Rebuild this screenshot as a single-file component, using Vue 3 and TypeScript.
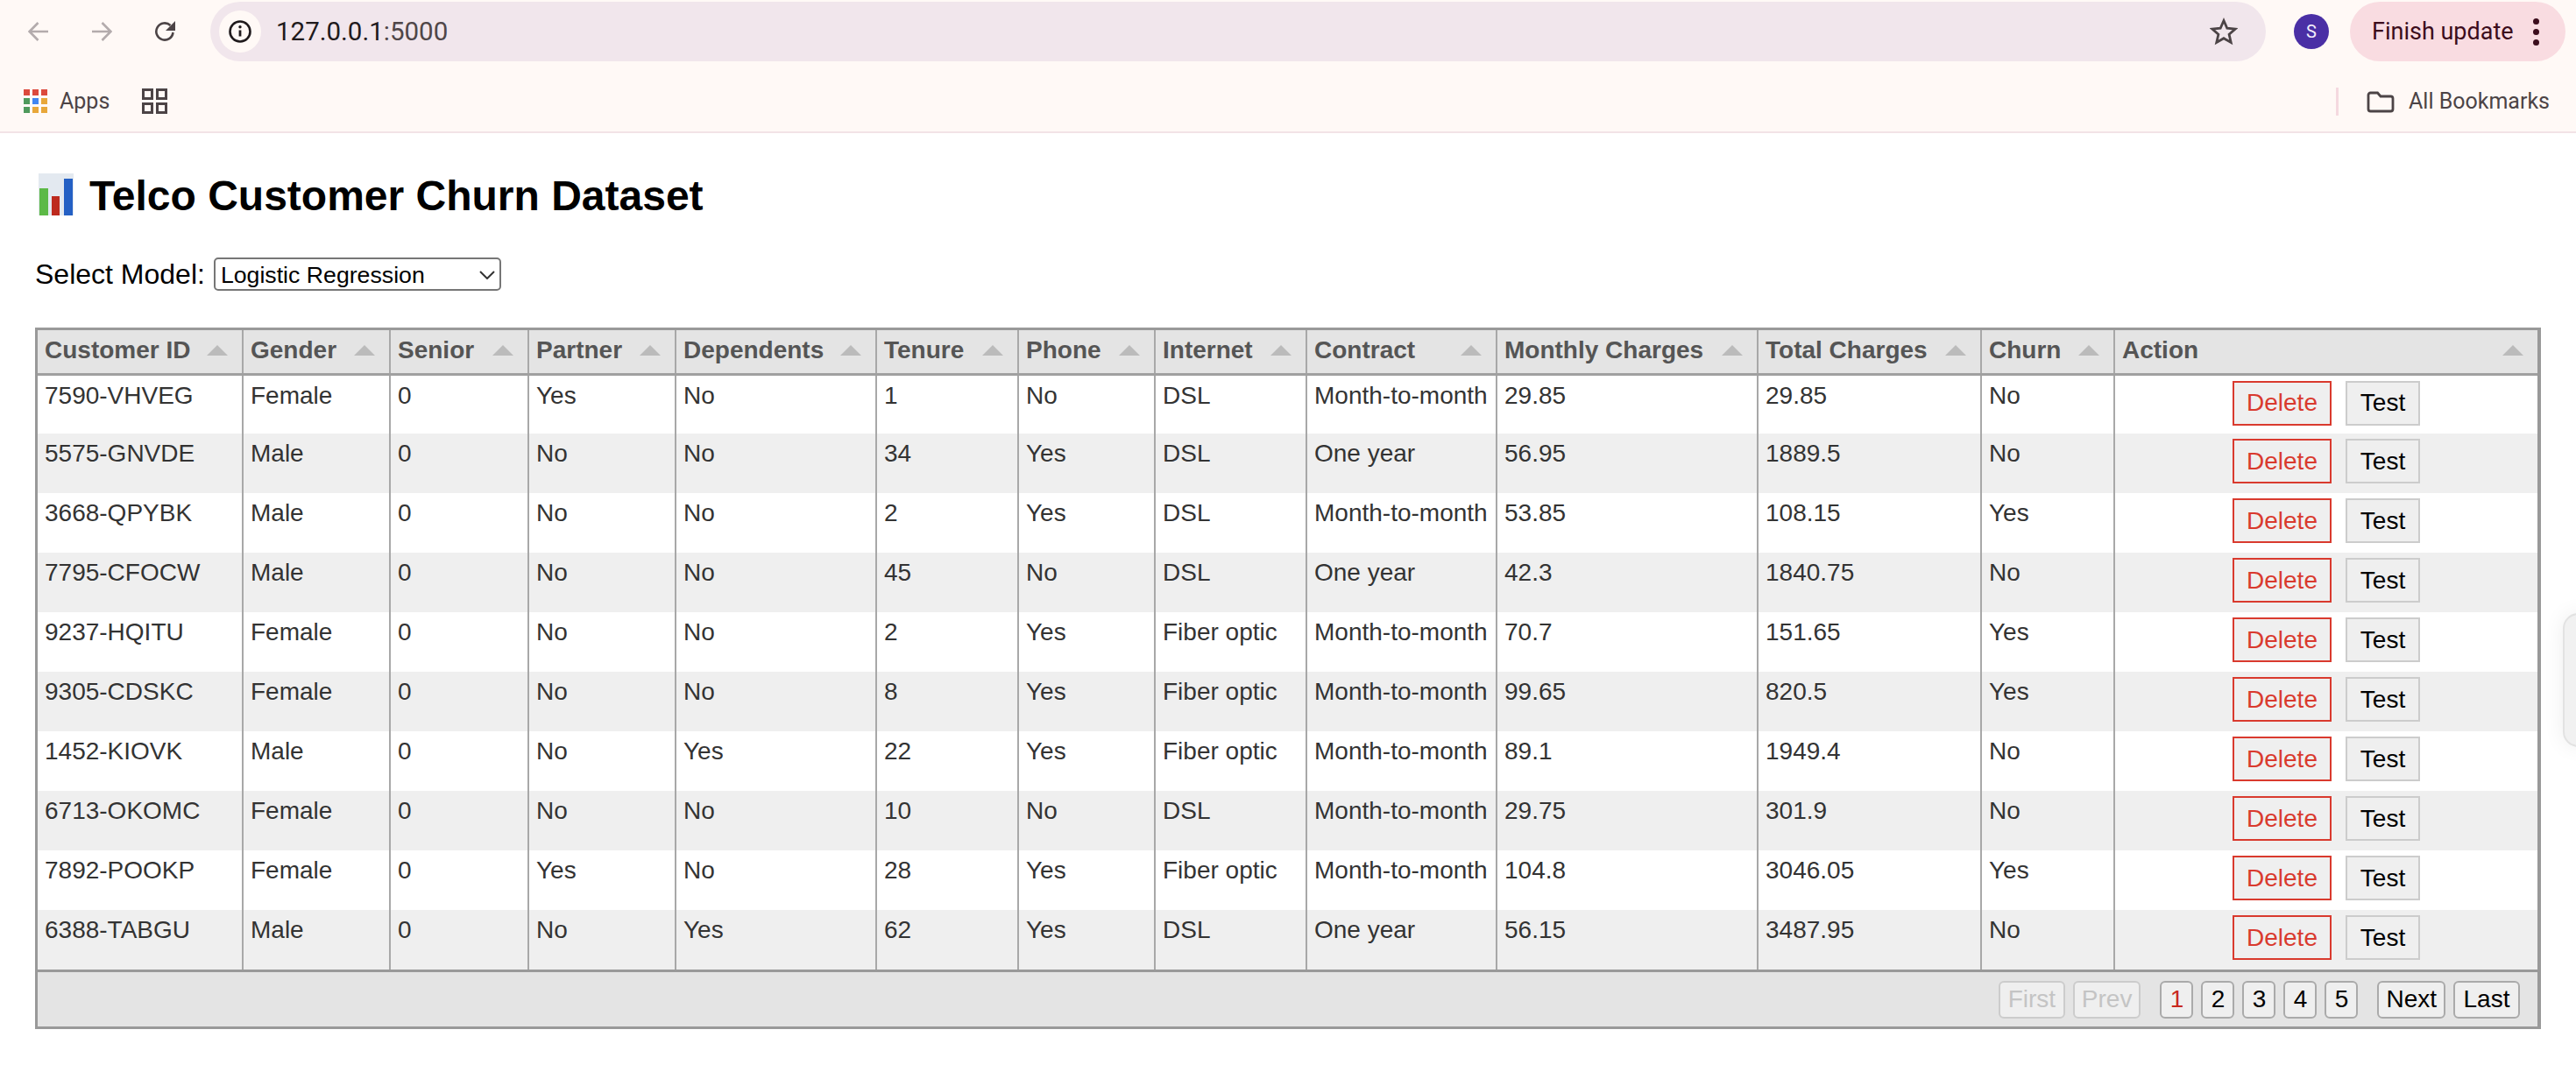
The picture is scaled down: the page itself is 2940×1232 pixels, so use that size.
<template>
  <div class="page">
    <header class="chrome">
      <div class="toolbar">
        <svg class="nav-icon dim" viewBox="0 0 24 24"><path d="M23 12H2.5M11.5 2 1.6 12l9.9 10" /></svg>
        <svg class="nav-icon dim" viewBox="0 0 24 24"><path d="M1 12h20.500M12.500 2l9.900 10-9.900 10" /></svg>
        <svg class="nav-icon" viewBox="0 0 24 24">
          <path d="M21.500 13a9.600 9.600 0 1 1-3-8" />
          <path class="solid" d="M24 0v11H13z" />
        </svg>
        <div class="omnibox">
          <div class="site-info">
            <svg viewBox="0 0 26 26" width="26" height="26">
              <circle cx="13" cy="13" r="11.500" fill="none" stroke="#1f1a1c" stroke-width="2.600" />
              <path d="M13 11.500v7" stroke="#1f1a1c" stroke-width="2.800" fill="none" />
              <circle cx="13" cy="7.800" r="1.700" fill="#1f1a1c" />
            </svg>
          </div>
          <span class="url">127.0.0.1<span class="port">:5000</span></span>
          <svg class="star" viewBox="0 0 32 32" width="32" height="32">
            <path d="M16 3.500l3.800 8.700 9.400.9-7.100 6.200 2.100 9.200-8.200-4.800-8.200 4.800 2.100-9.200-7.100-6.200 9.400-.9z" />
          </svg>
        </div>
        <div class="avatar">S</div>
        <div class="update-pill">
          <span>Finish update</span>
          <span class="dots"><i></i><i></i><i></i></span>
        </div>
      </div>
      <div class="bookmarks">
        <div class="apps-grid">
          <i v-for="(c, i) in appColors" :key="i" :style="{ background: c }"></i>
        </div>
        <span class="bm-label">Apps</span>
        <svg class="tabs-icon" viewBox="0 0 29 29" width="29" height="29">
          <path d="M1.500 1.500h10v10h-10zM17.500 1.500h10v10h-10zM1.500 17.500h10v10h-10zM17.500 17.500h10v10h-10z" />
        </svg>
        <div class="bm-right">
          <span class="divider"></span>
          <svg class="folder" viewBox="0 0 32 26" width="32" height="26">
            <path d="M2 5.500a2.500 2.500 0 0 1 2.500-2.500h8l3.500 4h11.500a2.500 2.500 0 0 1 2.500 2.500v12a2.500 2.500 0 0 1-2.500 2.500h-23a2.500 2.500 0 0 1-2.500-2.500z" />
          </svg>
          <span class="bm-label">All Bookmarks</span>
        </div>
      </div>
    </header>

    <main class="content">
      <h1>
        <svg class="chart-emoji" viewBox="0 0 40 48" width="40" height="48">
          <rect width="40" height="48" fill="#e3e9f0" />
          <rect x="1" y="17" width="10" height="31" fill="#5cb946" />
          <rect x="15" y="26" width="9" height="22" fill="#bd2a1e" />
          <rect x="29" y="6" width="10" height="42" fill="#2460c4" />
        </svg>
        <span class="title-text">Telco Customer Churn Dataset</span>
      </h1>

      <div class="model-row">
        <label for="model">Select Model:</label>
        <div class="select-wrap">
          <select id="model" v-model="model">
            <option v-for="m in models" :key="m" :value="m">{{ m }}</option>
          </select>
          <svg class="chevron" viewBox="0 0 18 10" width="18" height="10"><path d="M1 1l8 8 8-8" /></svg>
        </div>
      </div>

      <div class="table-wrap">
        <table>
          <colgroup>
            <col v-for="c in columns" :key="c.label" :style="{ width: c.width + 'px' }" />
          </colgroup>
          <thead>
            <tr>
              <th v-for="c in columns" :key="c.label">
                <div class="th-inner">
                  <span>{{ c.label }}</span>
                  <span class="sort-caret"></span>
                </div>
              </th>
            </tr>
          </thead>
          <tbody>
            <tr v-for="row in rows" :key="row[0]">
              <td v-for="(cell, i) in row" :key="i">{{ cell }}</td>
              <td class="actions">
                <button class="btn-delete">Delete</button>
                <button class="btn-test">Test</button>
              </td>
            </tr>
          </tbody>
        </table>
        <div class="pager">
          <div class="pager-group">
            <button class="pg" disabled>First</button>
            <button class="pg" disabled>Prev</button>
          </div>
          <div class="pager-group">
            <button v-for="n in 5" :key="n" class="pg num" :class="{ current: n === 1 }">{{ n }}</button>
          </div>
          <div class="pager-group">
            <button class="pg">Next</button>
            <button class="pg">Last</button>
          </div>
        </div>
      </div>
    </main>

    <div class="side-tab"></div>
  </div>
</template>

<script setup lang="ts">
import { ref } from 'vue'

const model = ref('Logistic Regression')
const models = ['Logistic Regression', 'Random Forest', 'Decision Tree']

const appColors = ['#dc4a3d', '#dc4a3d', '#dc4a3d', '#4f9a5c', '#4285f0', '#e8a73a', '#4f9a5c', '#e8a73a', '#e8a73a']

const columns = [
  { label: 'Customer ID', width: 234 },
  { label: 'Gender', width: 168 },
  { label: 'Senior', width: 158 },
  { label: 'Partner', width: 168 },
  { label: 'Dependents', width: 229 },
  { label: 'Tenure', width: 162 },
  { label: 'Phone', width: 156 },
  { label: 'Internet', width: 173 },
  { label: 'Contract', width: 217 },
  { label: 'Monthly Charges', width: 298 },
  { label: 'Total Charges', width: 255 },
  { label: 'Churn', width: 152 },
  { label: 'Action', width: 483 }
]

const rows = [
  ['7590-VHVEG', 'Female', '0', 'Yes', 'No', '1', 'No', 'DSL', 'Month-to-month', '29.85', '29.85', 'No'],
  ['5575-GNVDE', 'Male', '0', 'No', 'No', '34', 'Yes', 'DSL', 'One year', '56.95', '1889.5', 'No'],
  ['3668-QPYBK', 'Male', '0', 'No', 'No', '2', 'Yes', 'DSL', 'Month-to-month', '53.85', '108.15', 'Yes'],
  ['7795-CFOCW', 'Male', '0', 'No', 'No', '45', 'No', 'DSL', 'One year', '42.3', '1840.75', 'No'],
  ['9237-HQITU', 'Female', '0', 'No', 'No', '2', 'Yes', 'Fiber optic', 'Month-to-month', '70.7', '151.65', 'Yes'],
  ['9305-CDSKC', 'Female', '0', 'No', 'No', '8', 'Yes', 'Fiber optic', 'Month-to-month', '99.65', '820.5', 'Yes'],
  ['1452-KIOVK', 'Male', '0', 'No', 'Yes', '22', 'Yes', 'Fiber optic', 'Month-to-month', '89.1', '1949.4', 'No'],
  ['6713-OKOMC', 'Female', '0', 'No', 'No', '10', 'No', 'DSL', 'Month-to-month', '29.75', '301.9', 'No'],
  ['7892-POOKP', 'Female', '0', 'Yes', 'No', '28', 'Yes', 'Fiber optic', 'Month-to-month', '104.8', '3046.05', 'Yes'],
  ['6388-TABGU', 'Male', '0', 'No', 'Yes', '62', 'Yes', 'DSL', 'One year', '56.15', '3487.95', 'No']
]
</script>

<style>
html,
body {
  margin: 0;
  background: #fff;
}
</style>

<style scoped>
.page {
  position: relative;
  height: 1232px;
  overflow: hidden;
  font-family: "Liberation Sans", Arial, sans-serif;
}

/* browser bar */
.chrome {
  height: 152px;
  box-sizing: border-box;
  background: #fff9f6;
  border-bottom: 2px solid #f2e3e6;
  font-family: Roboto, "Liberation Sans", sans-serif;
}

.toolbar {
  display: flex;
  align-items: center;
  height: 72px;
  padding-left: 32px;
  padding-right: 12px;
  box-sizing: border-box;
}

.nav-icon {
  width: 24px;
  height: 24px;
  margin-right: 48px;
  fill: none;
  stroke: #4c4446;
  stroke-width: 2.600;
  flex: none;
}

.nav-icon.dim {
  stroke: #b3abac;
}

.nav-icon:nth-of-type(3) {
  margin-right: 40px;
}

.nav-icon .solid {
  fill: #4c4446;
  stroke: none;
}

.omnibox {
  display: flex;
  align-items: center;
  width: 2346px;
  height: 68px;
  padding-left: 10px;
  padding-right: 32px;
  box-sizing: border-box;
  background: #f1e6ec;
  border-radius: 34px;
  flex: none;
}

.site-info {
  display: flex;
  align-items: center;
  justify-content: center;
  width: 48px;
  height: 48px;
  background: #fff9f6;
  border-radius: 50%;
}

.url {
  margin-left: 17px;
  font-size: 29.500px;
  color: #1f1a1c;
}

.port {
  color: #4f4648;
}

.star {
  margin-left: auto;
  fill: none;
  stroke: #4c4446;
  stroke-width: 2.800;
}

.avatar {
  display: flex;
  align-items: center;
  justify-content: center;
  width: 40px;
  height: 40px;
  margin-left: 32px;
  background: #4a2fa5;
  color: #f3eefc;
  border-radius: 50%;
  font-size: 20px;
  flex: none;
}

.update-pill {
  display: flex;
  align-items: center;
  width: 246px;
  height: 68px;
  margin-left: 24px;
  padding-left: 25px;
  box-sizing: border-box;
  background: #f9dce1;
  border-radius: 34px;
  color: #3c0d1c;
  font-size: 27px;
  flex: none;
}

.dots {
  display: flex;
  flex-direction: column;
  gap: 5px;
  margin-left: 22px;
}

.dots i {
  display: block;
  width: 7px;
  height: 7px;
  background: #3c0d1c;
  border-radius: 50%;
}

.bookmarks {
  display: flex;
  align-items: center;
  height: 78px;
  padding: 9px 30px 0 27px;
  box-sizing: border-box;
}

.apps-grid {
  display: grid;
  grid-template-columns: repeat(3, 7px);
  grid-auto-rows: 7px;
  gap: 3px;
}

.apps-grid i {
  display: block;
}

.bm-label {
  color: #4c4446;
  font-size: 25px;
}

.apps-grid + .bm-label {
  margin-left: 14px;
}

.tabs-icon {
  margin-left: 37px;
  fill: none;
  stroke: #4c4446;
  stroke-width: 3;
}

.bm-right {
  display: flex;
  align-items: center;
  margin-left: auto;
}

.divider {
  width: 3px;
  height: 32px;
  margin-right: 32px;
  background: #f5d9df;
}

.folder {
  margin-right: 16px;
  fill: none;
  stroke: #4c4446;
  stroke-width: 2.800;
}

/* page */
.content {
  padding: 0 40px;
}

h1 {
  display: flex;
  align-items: center;
  gap: 18px;
  height: 48px;
  margin: 46px 0 0 4px;
  font-size: 48px;
  color: #000;
}

.title-text {
  padding-top: 3px;
}

.chart-emoji {
  flex: none;
}

.model-row {
  display: flex;
  align-items: center;
  height: 38px;
  margin-top: 48px;
  font-size: 32px;
  color: #000;
}

.select-wrap {
  position: relative;
  margin-left: 10px;
}

.select-wrap select {
  display: block;
  width: 328px;
  height: 38px;
  padding: 2px 6px 0;
  box-sizing: border-box;
  appearance: none;
  background: #fff;
  border: 2px solid #767676;
  border-radius: 5px;
  font-family: inherit;
  font-size: 26.700px;
  color: #000;
}

.chevron {
  position: absolute;
  top: 15px;
  right: 7px;
  fill: none;
  stroke: #333;
  stroke-width: 2;
  pointer-events: none;
}

.table-wrap {
  width: 2860px;
  margin-top: 42px;
  box-sizing: border-box;
  border: 3px solid #999;
  border-right-width: 4px;
}

table {
  width: 100%;
  table-layout: fixed;
  border-collapse: collapse;
  font-size: 28px;
  color: #333;
}

th {
  height: 50px;
  padding: 0 8px 3px;
  box-sizing: border-box;
  background: #e4e4e4;
  border-left: 2px solid #a8a8a8;
  border-bottom: 3px solid #a0a0a0;
  color: #555;
  font-weight: bold;
  text-align: left;
}

th:first-child,
td:first-child {
  border-left: none;
}

.th-inner {
  display: flex;
  align-items: center;
  justify-content: space-between;
  padding-right: 8px;
}

.sort-caret {
  width: 0;
  height: 0;
  border-left: 12px solid transparent;
  border-right: 12px solid transparent;
  border-bottom: 12px solid #bbb;
}

td {
  height: 68px;
  padding: 7px 8px 0;
  box-sizing: border-box;
  border-left: 2px solid #a8a8a8;
  vertical-align: top;
  line-height: 32px;
  white-space: nowrap;
}

tbody tr:nth-child(even) td {
  background: #efefef;
}

.actions {
  padding: 6px 0 0;
  text-align: center;
  font-size: 0;
}

.actions button {
  height: 51px;
  box-sizing: border-box;
  background: #efefef;
  font-family: inherit;
  font-size: 28px;
  border-width: 2px;
  border-style: solid;
  padding: 0;
}

.btn-delete {
  width: 113px;
  margin-right: 16px;
  border-color: #d93a2e;
  color: #d93a2e;
}

.btn-test {
  width: 85px;
  border-color: #ccc;
  color: #000;
}

.pager {
  display: flex;
  justify-content: flex-end;
  align-items: center;
  gap: 22px;
  height: 65px;
  padding-right: 20px;
  background: #e4e4e4;
  border-top: 3px solid #999;
  box-sizing: border-box;
}

.pager-group {
  display: flex;
  gap: 9px;
}

.pg {
  height: 43px;
  min-width: 76px;
  padding: 0 8px;
  box-sizing: border-box;
  background: #efefef;
  border: 2px solid #aaa;
  border-radius: 6px;
  font-family: inherit;
  font-size: 28px;
  color: #000;
}

.pg:disabled {
  border-color: #ccc;
  color: #c4c4c4;
}

.pg.num {
  min-width: 38px;
  width: 38px;
  padding: 0;
}

.pg.current {
  color: #c8281e;
}

.side-tab {
  position: absolute;
  top: 700px;
  right: -20px;
  width: 35px;
  height: 153px;
  box-sizing: border-box;
  background: #f1f1f1;
  border: 2px solid #e2e2e2;
  border-radius: 18px;
  box-shadow: 0 0 24px rgba(0, 0, 0, 0.07);
}
</style>
